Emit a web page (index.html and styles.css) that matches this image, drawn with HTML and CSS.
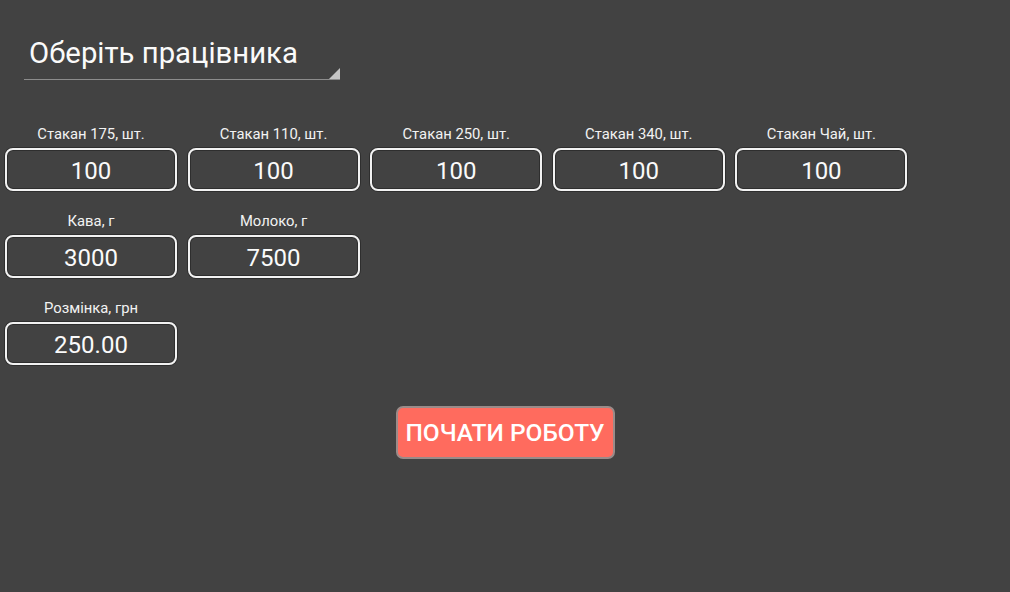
FILE: index.html
```html
<!DOCTYPE html>
<html lang="uk">
<head>
<meta charset="utf-8">
<title>Початок зміни</title>
<link rel="stylesheet" href="styles.css">
</head>
<body>
<div class="spinner">
  <span class="spinner-text">Оберіть працівника</span>
  <span class="spinner-arrow"></span>
</div>
<div class="rows">
  <div class="row">
    <div class="field"><div class="label">Стакан 175, шт.</div><div class="box">100</div></div>
    <div class="field"><div class="label">Стакан 110, шт.</div><div class="box">100</div></div>
    <div class="field"><div class="label">Стакан 250, шт.</div><div class="box">100</div></div>
    <div class="field"><div class="label">Стакан 340, шт.</div><div class="box">100</div></div>
    <div class="field"><div class="label">Стакан Чай, шт.</div><div class="box">100</div></div>
  </div>
  <div class="row">
    <div class="field"><div class="label">Кава, г</div><div class="box">3000</div></div>
    <div class="field"><div class="label">Молоко, г</div><div class="box">7500</div></div>
  </div>
  <div class="row">
    <div class="field"><div class="label">Розмінка, грн</div><div class="box">250.00</div></div>
  </div>
</div>
<div class="actions">
  <button class="start">ПОЧАТИ РОБОТУ</button>
</div>
</body>
</html>
```

FILE: styles.css
```css
html, body {
  margin: 0;
  padding: 0;
  background: #424242;
  font-family: Roboto, "Noto Sans", "DejaVu Sans", sans-serif;
  color: #f5f5f5;
  height: 100%;
}

.spinner {
  position: relative;
  margin: 37px 0 0 24px;
  width: 316px;
  padding-bottom: 10px;
  border-bottom: 1px solid #8c8c8c;
}

.spinner-text {
  display: block;
  padding-left: 5px;
  font-size: 29.3px;
  line-height: 32px;
  color: #fafafa;
}

.spinner-arrow {
  position: absolute;
  right: 0;
  bottom: 0;
  width: 11px;
  height: 11px;
  background: #c4c4c4;
  clip-path: polygon(100% 0, 100% 100%, 0 100%);
}

.rows {
  margin-top: 46px;
  padding-left: 5px;
  display: flex;
  flex-direction: column;
  gap: 22px;
}

.row {
  display: flex;
  gap: 10.6px;
}

.field {
  width: 172px;
  display: flex;
  flex-direction: column;
  align-items: stretch;
}

.label {
  font-size: 14.8px;
  line-height: 16px;
  text-align: center;
  color: #f2f2f2;
  margin-bottom: 6px;
}

.box {
  box-sizing: border-box;
  height: 43px;
  border: 2px solid #f2f2f2;
  border-radius: 8px;
  box-shadow: inset 0 0 0 1px #2e2e2e, 0 0 0 1px #2e2e2e;
  display: flex;
  align-items: center;
  justify-content: center;
  font-size: 24px;
  color: #fafafa;
  padding-top: 2px;
}

.actions {
  display: flex;
  justify-content: center;
  margin-top: 41px;
}

.start {
  box-sizing: border-box;
  width: 219px;
  height: 53px;
  background: #ff6b5e;
  border: 2px solid #9a8b89;
  border-radius: 7px;
  color: #ffffff;
  font-family: Roboto, "Noto Sans", sans-serif;
  font-weight: 500;
  font-size: 24.5px;
  padding: 0;
}
```
